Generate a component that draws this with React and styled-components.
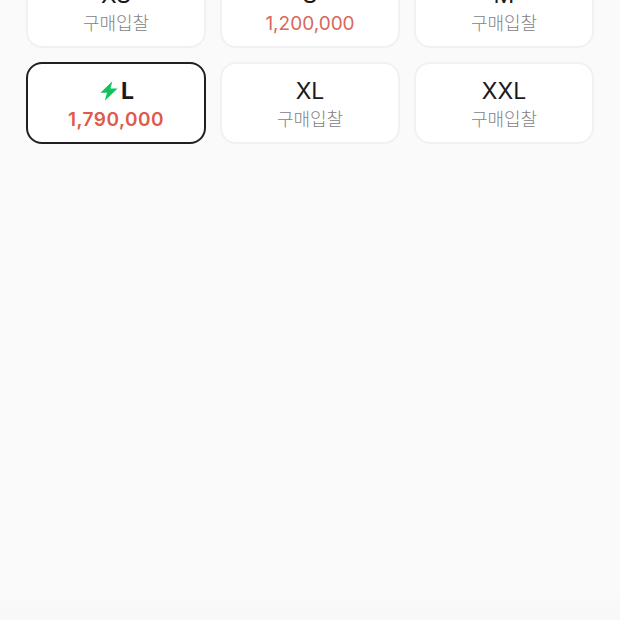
import React from 'react'
import styled, { createGlobalStyle } from "styled-components"

const GlobalStyle = createGlobalStyle`
html, body {
  margin: 0;
  height: 100%;
  overflow: hidden;
  background-color: #fafafa;
}
body {
  font-family: Inter, "Noto Sans CJK KR", sans-serif;
}
`

const sizes = [
  { name: "XS", label: "구매입찰" },
  { name: "S", price: "1,200,000" },
  { name: "M", label: "구매입찰" },
  { name: "L", price: "1,790,000", fast: true, selected: true },
  { name: "XL", label: "구매입찰" },
  { name: "XXL", label: "구매입찰" },
]

const Bolt = () => (
  <BoltIcon viewBox="0 0 18 20" aria-hidden="true">
    <path d="M12.4 0.2 L0.4 11.8 L7 11.8 L4.8 19.8 L17.6 7.6 L10.4 7.6 Z" fill="#12c25a" />
  </BoltIcon>
)

const App = () => {
  return (
    <Page>
      <GlobalStyle />
      <SizeGrid>
        {sizes.map(size => (
          <SizeCard key={size.name} $selected={size.selected}>
            <SizeName $selected={size.selected}>
              {size.fast && <Bolt />}
              {size.name}
            </SizeName>
            {size.price
              ? <Price $selected={size.selected}>{size.price}</Price>
              : <BidLabel>{size.label}</BidLabel>}
          </SizeCard>
        ))}
      </SizeGrid>
    </Page>
  )
}

const Page = styled.main`
width: 620px;
height: 620px;
overflow: hidden;
background: linear-gradient(to bottom, #fafafa 0, #fafafa 590px, #f8f8f8 620px);
`

const SizeGrid = styled.section`
display: grid;
grid-template-columns: repeat(3, 180px);
grid-auto-rows: 82px;
gap: 14px;
padding: 0 26px;
margin-top: -34px;
`

const SizeCard = styled.div`
box-sizing: border-box;
background-color: #fff;
border: ${p => (p.$selected ? "2px solid #202022" : "2px solid #f1f1f1")};
border-radius: 16px;
display: flex;
flex-direction: column;
align-items: center;
padding-top: 13px;
`

const SizeName = styled.div`
display: flex;
align-items: center;
justify-content: center;
gap: 3px;
height: 28px;
padding-left: ${p => (p.$selected ? "2px" : "0")};
font-size: 23px;
font-weight: ${p => (p.$selected ? 700 : 400)};
color: #1a1a1a;
`

const BoltIcon = styled.svg`
width: 18px;
height: 20px;
`

const BidLabel = styled.div`
height: 28px;
line-height: 30px;
font-size: 18px;
font-weight: 300;
color: #828282;
`

const Price = styled.div`
height: 28px;
line-height: 30px;
font-size: 19px;
letter-spacing: ${p => (p.$selected ? "0.5px" : "0")};
font-weight: ${p => (p.$selected ? 600 : 400)};
color: ${p => (p.$selected ? "#e05a4b" : "#d9675a")};
`

export default App
